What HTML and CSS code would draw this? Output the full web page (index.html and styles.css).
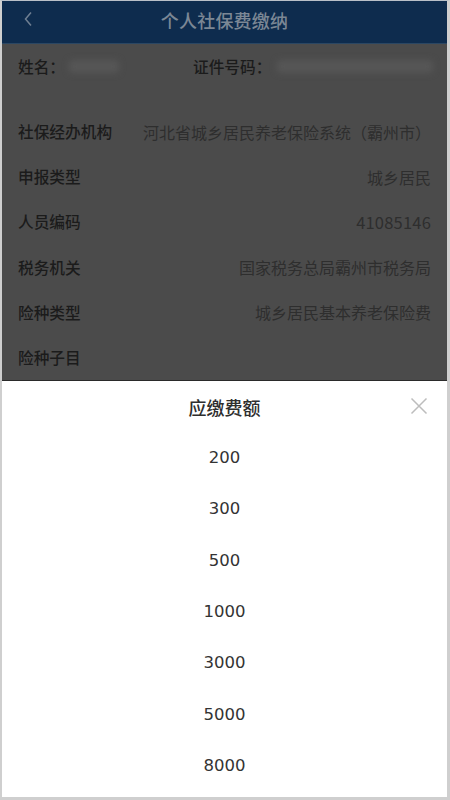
FILE: index.html
```html
<!DOCTYPE html>
<html lang="zh-CN">
<head>
<meta charset="utf-8">
<title>个人社保费缴纳</title>
<link rel="stylesheet" href="styles.css">
</head>
<body>
<div class="frame">
  <div class="page">
    <header class="topbar">
      <svg class="back" width="10" height="16" viewBox="0 0 10 16"><path d="M8 1.5 L2.5 8 L8 14.5" fill="none" stroke="#6f7f92" stroke-width="1.5"/></svg>
      <div class="topbar-title">个人社保费缴纳</div>
    </header>
    <div class="idrow">
      <div class="idcell idcell-name"><span class="lbl">姓名：</span><span class="blur blur-name"></span></div>
      <div class="idcell idcell-no"><span class="lbl">证件号码：</span><span class="blur blur-no"></span></div>
    </div>
    <div class="rows">
      <div class="row"><span class="lbl">社保经办机构</span><span class="val">河北省城乡居民养老保险系统（霸州市）</span></div>
      <div class="row"><span class="lbl">申报类型</span><span class="val">城乡居民</span></div>
      <div class="row"><span class="lbl">人员编码</span><span class="val num">41085146</span></div>
      <div class="row"><span class="lbl">税务机关</span><span class="val">国家税务总局霸州市税务局</span></div>
      <div class="row"><span class="lbl">险种类型</span><span class="val">城乡居民基本养老保险费</span></div>
      <div class="row"><span class="lbl">险种子目</span><span class="val"></span></div>
    </div>
  </div>
  <div class="sheet">
    <div class="sheet-head">
      <span class="sheet-title">应缴费额</span>
      <svg class="close" width="18" height="18" viewBox="0 0 18 18"><path d="M1.5 1.5 L16.5 16.5 M16.5 1.5 L1.5 16.5" fill="none" stroke="#bdbdbd" stroke-width="1.5"/></svg>
    </div>
    <ul class="opts">
      <li class="opt">200</li>
      <li class="opt">300</li>
      <li class="opt">500</li>
      <li class="opt">1000</li>
      <li class="opt">3000</li>
      <li class="opt">5000</li>
      <li class="opt">8000</li>
    </ul>
  </div>
</div>
</body>
</html>
```
FILE: styles.css
```css
* { box-sizing: border-box; }
html, body { margin: 0; padding: 0; }
body {
  width: 450px;
  height: 800px;
  font-family: "Noto Sans CJK SC", "Noto Sans", sans-serif;
  background: #fff;
  overflow: hidden;
}
.frame {
  width: 450px;
  height: 800px;
  display: flex;
  flex-direction: column;
  border-top: 1px solid #b9c0c8;
  border-left: 2px solid #cfcfcf;
  border-right: 3px solid #cfcfcf;
  border-bottom: 3px solid #cfcfcf;
}
.page {
  height: 379px;
  background: #4b4b4b;
  display: flex;
  flex-direction: column;
  flex: none;
}
.topbar {
  height: 43px;
  background: #0e2c4e;
  border-bottom: 1px solid #2b4763;
  position: relative;
  display: flex;
  align-items: center;
  justify-content: center;
  flex: none;
}
.back {
  position: absolute;
  left: 21px;
  top: 10px;
}
.topbar-title {
  color: #7b8795;
  font-size: 18px;
  font-weight: 500;
  letter-spacing: 0.2px;
  margin-top: -4px;
}
.idrow {
  height: 45px;
  display: flex;
  align-items: center;
  padding: 0 14px 0 16px;
  flex: none;
}
.idcell { display: flex; align-items: center; }
.idcell-name { width: 175px; }
.idcell-no { flex: 1; }
.lbl {
  color: #1b1b1b;
  font-size: 15.7px;
  font-weight: 500;
}
.blur {
  display: inline-block;
  height: 13px;
  background: #565656;
  filter: blur(3px);
  border-radius: 4px;
}
.blur-name { width: 50px; margin-left: 4px; }
.blur-no { flex: 1; margin-left: 6px; }
.rows {
  margin-top: 20px;
  display: flex;
  flex-direction: column;
}
.row {
  height: 45.2px;
  display: flex;
  align-items: center;
  justify-content: space-between;
  padding: 0 16px 0 16px;
}
.val {
  color: #2e2e2e;
  font-size: 16px;
}
.val.num {
  font-size: 16.5px;
  letter-spacing: 0.2px;
}
.sheet {
  flex: 1;
  background: #fff;
  border-top: 1px solid #2a2a2a;
  display: flex;
  flex-direction: column;
}
.sheet-head {
  height: 51px;
  position: relative;
  display: flex;
  align-items: center;
  justify-content: center;
  flex: none;
}
.sheet-title {
  color: #2e2e2e;
  font-size: 18px;
  font-weight: 500;
}
.close {
  position: absolute;
  right: 19px;
  top: 16px;
}
.opts {
  list-style: none;
  margin: 0;
  padding: 0;
}
.opt {
  height: 51.3px;
  display: flex;
  align-items: center;
  justify-content: center;
  color: #333;
  font-family: "DejaVu Sans", sans-serif;
  font-size: 16.5px;
}
```
